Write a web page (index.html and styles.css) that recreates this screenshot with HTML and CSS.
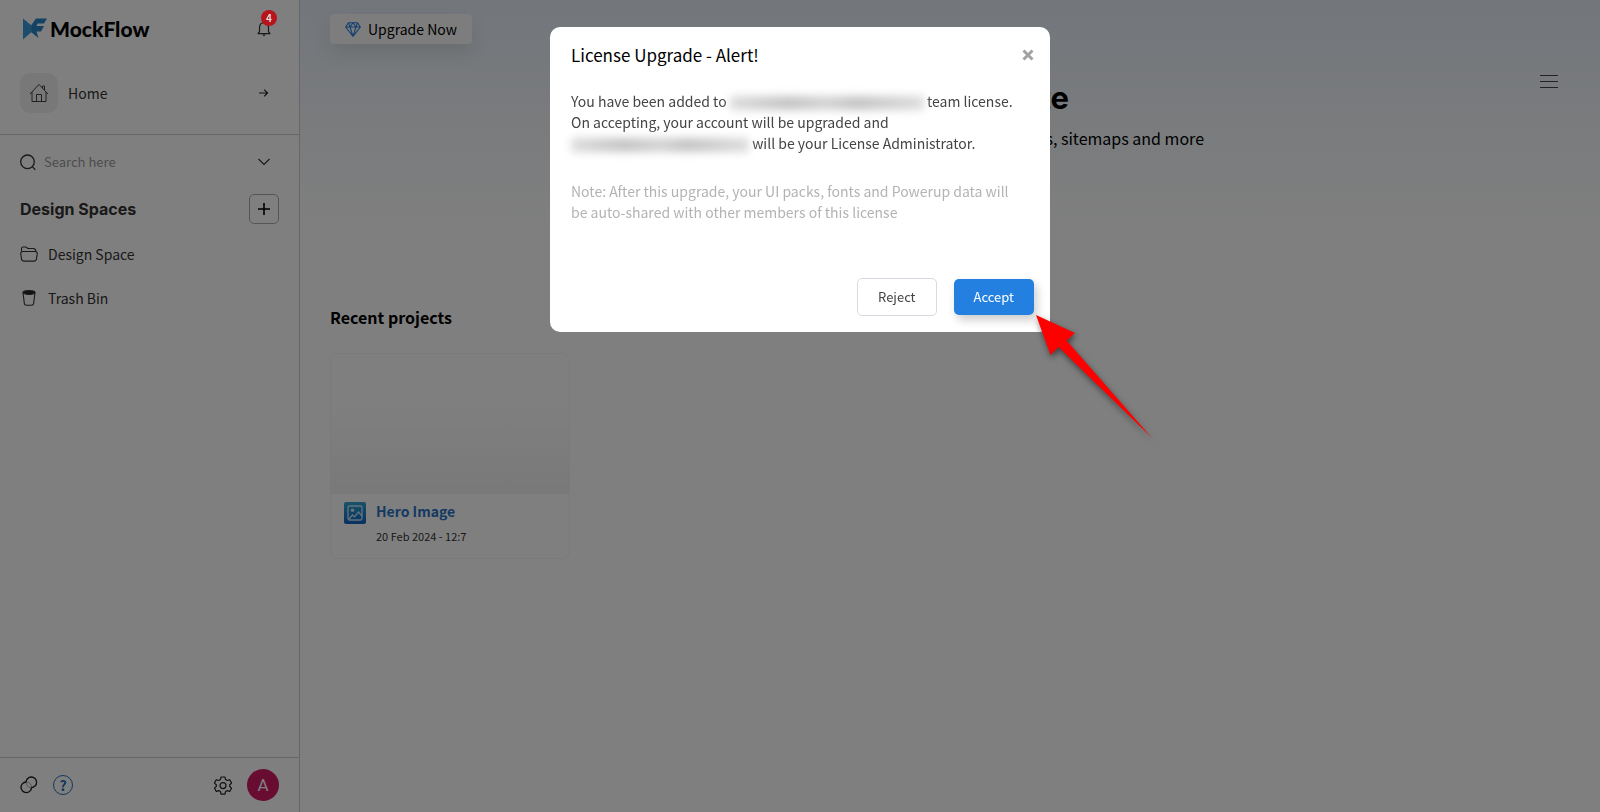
FILE: index.html
```html
<!DOCTYPE html>
<html lang="en">
<head>
<meta charset="utf-8">
<title>MockFlow</title>
<link rel="stylesheet" href="styles.css">
</head>
<body>
<div class="app">
  <aside class="sidebar">
    <header class="brand">
      <a class="logo" href="#">
        <svg width="24" height="22" viewBox="0 0 24 22" aria-hidden="true"><path d="M8 7.500L13 .5h11L21 5.500h-6.500l-1 2.500H21l-3 5.500h-4.500L15.500 20 8 14z" fill="#2784c4"/><path d="M0 .5l8.500 7v6.500L0 21.500z" fill="#3a9bdb"/></svg>
        <span>MockFlow</span>
      </a>
      <button class="icon-btn bell" aria-label="Notifications">
        <svg width="14" height="16" viewBox="0 0 14 16" fill="none" stroke="#333" stroke-width="1.2"><path d="M1 12.6h12l-1.500-2V6.500C11.500 3.500 9.600 1.600 7 1.600S2.500 3.500 2.500 6.500v4.100zM7 1.600V.3" stroke-linejoin="round"/><path d="M5.300 13.500h3.400L7 15.400z" fill="#333" stroke="none"/></svg>
        <span class="badge">4</span>
      </button>
    </header>
    <a class="home" href="#">
      <span class="home-tile"><svg width="20" height="20" viewBox="0 0 20 20" fill="none" stroke="#444" stroke-width="1"><path d="M1 11l9-9.500L19 11M3 9v9.500h14V9M7.500 18.500v-7h5v7M13.500 5V3h2v4"/></svg></span>
      <span class="home-label">Home</span>
      <svg width="10" height="8" viewBox="0 0 10 8" fill="none" stroke="#222" stroke-width="1.200"><path d="M0 4h8.500M5.200.7L8.500 4 5.200 7.300"/></svg>
    </a>
    <div class="search">
      <svg width="16" height="17" viewBox="0 0 16 17" fill="none" stroke="#333" stroke-width="1.300"><circle cx="7.500" cy="7.800" r="6.800"/><path d="M12.300 12.600l3 3.200"/></svg>
      <input type="text" placeholder="Search here" aria-label="Search here">
      <button class="icon-btn" aria-label="Search options"><svg width="12" height="8" viewBox="0 0 12 8" fill="none" stroke="#333" stroke-width="1.200"><path d="M.5 1L6 6.500 11.500 1"/></svg></button>
    </div>
    <div class="spaces-head">
      <h2>Design Spaces</h2>
      <button class="add" aria-label="Add design space"><svg width="12" height="12" viewBox="0 0 12 12" stroke="#000" stroke-width="1.600"><path d="M6 0v12M0 6h12"/></svg></button>
    </div>
    <nav class="spaces">
      <a href="#"><svg width="18" height="16" viewBox="0 0 18 16" fill="none" stroke="#333" stroke-width="1.100"><path d="M1.500 5.500V2.600C1.500 1.500 2 1 3.200 1h2.300c.8 0 1.100.3 1.600.8.4.5.8.7 1.500.7h4.600c1.500 0 2.500.7 2.800 3"/><path d="M3 5.500h12c1.700 0 2.400.8 2.200 2.300l-.7 5c-.3 1.700-1.200 2.300-2.700 2.300H4.200c-1.500 0-2.400-.6-2.700-2.300l-.7-5C.6 6.300 1.300 5.500 3 5.500z"/></svg><span>Design Space</span></a>
      <a href="#"><svg width="18" height="16" viewBox="0 0 18 16" fill="none" stroke="#333" stroke-width="1.100"><path d="M3 2.500l1.300 10.800c.2 1.300.9 1.900 2.200 1.900h5c1.300 0 2-.6 2.200-1.900L15 2.500"/><ellipse cx="9" cy="2.500" rx="6" ry="1.900" fill="#222"/></svg><span>Trash Bin</span></a>
    </nav>
    <footer class="side-foot">
      <button class="icon-btn" aria-label="Links"><svg width="18" height="18" viewBox="0 0 18 18" fill="none" stroke="#222" stroke-width="1.300"><circle cx="6.300" cy="11.300" r="5.300" stroke="#888" stroke-width=".7"/><circle cx="11.300" cy="6.300" r="5.300" stroke="#888" stroke-width=".7"/><path d="M6.100 6A5.300 5.300 0 1 0 11.600 11.500M6 6.200a5.300 5.300 0 1 1 5.400 5.400"/></svg></button>
      <button class="icon-btn help" aria-label="Help">?</button>
      <button class="icon-btn gear" aria-label="Settings"><svg width="18" height="19" viewBox="0 0 18 19" fill="none" stroke="#222" stroke-width="1.200" stroke-linejoin="round"><path d="M7 1h4l.5 2.500 1.800 1L15.700 3.700l1.900 3.400-1.900 1.600v1.800l1.900 1.600-1.900 3.400-2.400-.9-1.800 1L11 18.200H7l-.5-2.600-1.800-1-2.400.9-1.900-3.400 1.900-1.600V8.700L.4 7.100l1.900-3.400 2.400.8 1.800-1z"/><circle cx="9" cy="9.600" r="3"/></svg></button>
      <button class="avatar" aria-label="Account">A</button>
    </footer>
  </aside>

  <main class="main">
    <div class="topbar">
      <button class="upgrade"><svg width="16" height="15" viewBox="0 0 16 15" fill="none" stroke="#2a80dd" stroke-width="1.100" stroke-linejoin="round"><path d="M3.500.7h9L15.400 5 8 14.300.6 5zM.6 5h14.800M3.500.7L5 5l3 9.300L11 5l1.500-4.300M5 5l3-4.300L11 5"/></svg><span>Upgrade Now</span></button>
    </div>
    <section class="hero">
      <button class="icon-btn menu" aria-label="Menu"><svg width="18" height="13" viewBox="0 0 18 13" stroke="#444" stroke-width="1"><path d="M0 .5h18M0 6.500h18M0 12.500h18"/></svg></button>
      <div class="hero-text">
        <h1>te</h1>
        <p>s, sitemaps and more</p>
      </div>
    </section>
    <section class="recent">
      <h3>Recent projects</h3>
      <article class="card">
        <div class="thumb"></div>
        <div class="card-body">
          <svg width="22" height="22" viewBox="0 0 22 22" fill="none"><defs><linearGradient id="tile" x1="0" y1="0" x2="0" y2="1"><stop stop-color="#30a6cf"/><stop offset="1" stop-color="#1461c4"/></linearGradient></defs><rect width="22" height="22" rx="2" fill="url(#tile)"/><rect x="4" y="4" width="14" height="14" rx="1.500" stroke="#c8e8fa" stroke-width="1.300"/><circle cx="8.500" cy="8.200" r="1.800" fill="#c8e8fa"/><path d="M5 17l3.500-4 2 1.800L14.500 10l3.500 4" stroke="#c8e8fa" stroke-width="1.300"/></svg>
          <div>
            <a href="#">Hero Image</a>
            <time>20 Feb 2024 - 12:7</time>
          </div>
        </div>
      </article>
    </section>
  </main>
</div>

<div class="overlay">
  <div class="dialog" role="dialog" aria-labelledby="dlg-title">
    <header class="dialog-head">
      <h2 id="dlg-title">License Upgrade - Alert!</h2>
      <button class="icon-btn" aria-label="Close"><svg width="12" height="12" viewBox="0 0 12 12" stroke="#a2a2a2" stroke-width="3"><path d="M1.500 1.500l9 9M10.500 1.500l-9 9"/></svg></button>
    </header>
    <p class="message">You have been added to <span class="redacted long"></span> team license.<br>On accepting, your account will be upgraded and<br><span class="redacted"></span> will be your License Administrator.</p>
    <p class="note">Note: After this upgrade, your UI packs, fonts and Powerup data will be auto-shared with other members of this license</p>
    <div class="actions">
      <button class="reject">Reject</button>
      <button class="accept">Accept</button>
    </div>
    <svg class="pointer" width="130" height="136" viewBox="0 0 130 136" aria-hidden="true"><path d="M1 1l39 18-8.500 7.500L117 124 23.500 33 15.500 41z" fill="#f00"/></svg>
  </div>
</div>
</body>
</html>
```
FILE: styles.css
```css
* { box-sizing: border-box; }
body {
  margin: 0;
  font-family: "Noto Sans CJK SC", "Noto Sans", sans-serif;
  font-size: 14px;
  line-height: 24px;
  color: #333;
  background: #fff;
}
h1, h2, h3, p { margin: 0; }
a { color: inherit; text-decoration: none; }
button, input { font: inherit; color: inherit; }
svg { display: block; flex: none; }
.icon-btn {
  display: flex;
  align-items: center;
  justify-content: center;
  padding: 0;
  border: 0;
  background: none;
}
.app { display: flex; min-height: 100vh; }

.sidebar {
  display: flex;
  flex-direction: column;
  flex: none;
  width: 300px;
  border-right: 1px solid #ccc;
}
.brand {
  display: flex;
  align-items: center;
  justify-content: space-between;
  padding: 15px 28px 0 23px;
}
.logo {
  display: flex;
  align-items: center;
  gap: 3px;
  font: 900 21px/28px Lato, sans-serif;
  color: #000;
}
.bell { position: relative; }
.badge {
  position: absolute;
  z-index: 5;
  top: -11px;
  left: 4px;
  width: 16px;
  border-radius: 8px;
  background: #b8141b;
  color: #ddd;
  font-size: 10px;
  font-weight: 700;
  line-height: 16px;
}
.home {
  display: flex;
  align-items: center;
  gap: 10px;
  padding: 30px 30px 21px 20px;
  border-bottom: 1px solid #ccc;
}
.home-tile {
  display: grid;
  place-items: center;
  width: 38px;
  height: 40px;
  border-radius: 10px;
  background: #f0f0f0;
}
.home-label { flex: 1; }
.search {
  display: flex;
  align-items: center;
  gap: 8px;
  padding: 15px 29px 0 20px;
}
.search input {
  flex: 1;
  min-width: 0;
  padding: 0;
  border: 0;
  background: none;
  font-size: 13px;
  line-height: 24px;
}
.search input::placeholder { color: #999; opacity: 1; }
.spaces-head {
  display: flex;
  align-items: center;
  justify-content: space-between;
  padding: 20px 20px 0;
}
.spaces-head h2 { font: 700 16px/24px Inter, sans-serif; }
.add {
  display: grid;
  place-items: center;
  width: 30px;
  height: 30px;
  padding: 0;
  border: 1px solid #aaa;
  border-radius: 5px;
  background: none;
}
.spaces { display: grid; gap: 20px; padding: 18px 20px; }
.spaces a { display: flex; align-items: center; gap: 10px; }
.side-foot {
  display: flex;
  align-items: center;
  gap: 15px;
  margin-top: auto;
  padding: 11px 20px;
  border-top: 1px solid #ccc;
}
.help {
  width: 20px;
  height: 20px;
  border: 1px solid #2270bb;
  border-radius: 50%;
  color: #2270bb;
  font-size: 14px;
  font-weight: 700;
  line-height: 18px;
}
.gear { margin-left: auto; }
.avatar {
  width: 32px;
  height: 32px;
  padding: 0;
  border: 0;
  border-radius: 50%;
  background: #d01a62;
  color: #fff;
  font: 17px/32px Roboto, sans-serif;
}

.main {
  flex: 1;
  min-width: 0;
  padding: 14px 30px 0;
  background: linear-gradient(#e6edf6, #fff 230px);
}
.upgrade {
  display: flex;
  align-items: center;
  gap: 7px;
  height: 30px;
  padding: 0 15px;
  border: 0;
  border-radius: 4px;
  background: #fafafa;
  color: #000;
  box-shadow: 0 8px 20px rgba(0, 0, 0, .1);
}
.hero { position: relative; padding-top: 32px; color: #000; }
.menu { position: absolute; top: 31px; right: 12px; }
.hero-text { width: 508px; margin: 0 auto; text-align: right; }
.hero h1 { padding-right: 135px; font: 700 31px/44px Inter, sans-serif; }
.hero p { padding-top: 5px; font-size: 16px; line-height: 26px; }
.recent { padding-top: 153px; }
.recent h3 { font-size: 16px; font-weight: 700; line-height: 26px; color: #000; }
.card {
  width: 240px;
  margin-top: 23px;
  border: 1px solid #f5f5f5;
  border-radius: 8px;
  overflow: hidden;
}
.thumb { height: 140px; background: linear-gradient(#fff 35%, #f2f2f2); }
.card-body { display: flex; gap: 10px; padding: 8px 13px; min-height: 64px; }
.card-body a { display: block; color: #2a74c4; font-weight: 700; line-height: 18px; }
.card-body time { display: block; margin-top: 7px; font-size: 11px; line-height: 18px; }

.overlay {
  position: fixed;
  inset: 0;
  padding-top: 27px;
  background: rgba(0, 0, 0, .5);
}
.dialog {
  position: relative;
  width: 500px;
  margin: 0 auto;
  padding: 16px 16px 16px 21px;
  border-radius: 10px;
  background: #fff;
}
.dialog-head {
  display: flex;
  align-items: center;
  justify-content: space-between;
}
.dialog-head h2 { font-size: 17px; font-weight: 400; color: #000; }
.message { padding-top: 24px; line-height: 21px; color: #444; }
.note { padding: 27px 14px 0 0; line-height: 21px; color: #b3b3b3; }
.redacted {
  display: inline-block;
  width: 178px;
  height: 14px;
  vertical-align: -3px;
  background: linear-gradient(90deg, #ddd, #c4c4c4 30%, #d4d4d4 50%, #c4c4c4 65%, #ddd);
  filter: blur(4px);
}
.redacted.long { width: 194px; }
.actions {
  display: flex;
  align-items: center;
  justify-content: flex-end;
  gap: 17px;
  padding-top: 55px;
}
.actions button { border-radius: 5px; font-size: 13px; line-height: 20px; }
.reject {
  padding: 8px 20px;
  border: 1px solid #d5dbe0;
  background: #fff;
  color: #444;
}
.accept {
  padding: 8px 20px;
  border: 0;
  background: #2480e0;
  color: #fff;
  box-shadow: 3px 5px 10px rgba(0, 0, 0, .2);
}
.pointer {
  position: absolute;
  top: 287px;
  left: 485px;
  filter: drop-shadow(1px 3px 3px rgba(0, 0, 0, .5));
}
```
